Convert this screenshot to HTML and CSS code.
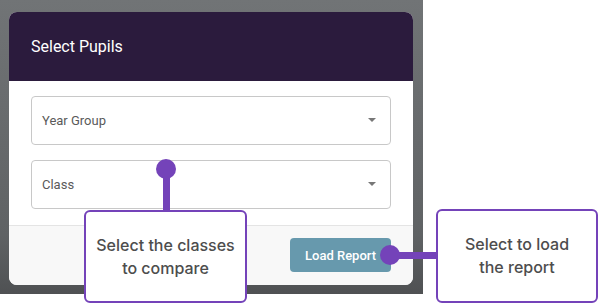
FILE: index.html
```html
<!DOCTYPE html>
<html lang="en">
<head>
  <meta charset="UTF-8" />
  <title>Select Pupils</title>
  <link rel="stylesheet" href="styles.css">
</head>
<body>
  <div class="backdrop">
    <div class="modal">
      <div class="modal-header">Select Pupils</div>
      <div class="modal-body">
        <div class="select-box">
          <span>Year Group</span>
          <span class="caret"></span>
        </div>
        <div class="select-box">
          <span>Class</span>
          <span class="caret"></span>
        </div>
      </div>
      <div class="modal-footer">
        <button class="load-btn">Load Report</button>
      </div>
    </div>
  </div>

  <!-- tutorial callouts -->
  <div class="pin pin-class">
    <span class="dot"></span>
    <span class="stem"></span>
  </div>
  <div class="callout callout-class">Select the classes<br>to compare</div>

  <div class="pin pin-load">
    <span class="dot"></span>
    <span class="arm"></span>
  </div>
  <div class="callout callout-load">Select to load<br>the report</div>
</body>
</html>
```

FILE: styles.css
```css
body {
  margin: 0;
  width: 601px;
  height: 306px;
  background-color: white;
  font-family: Roboto, "Liberation Sans", sans-serif;
  position: relative;
  overflow: hidden;
}
.backdrop {
  width: 423px;
  height: 294px;
  box-sizing: border-box;
  padding: 12px 10px 0 9px;
  background: linear-gradient(#717476, #5f6264 80%, #4f5153);
}
.modal {
  width: 404px;
  height: 273px;
  background-color: white;
  border-radius: 8px;
  overflow: hidden;
  display: flex;
  flex-direction: column;
}
.modal-header {
  height: 69px;
  background-color: #2b1b3d;
  color: white;
  font-size: 16px;
  padding-left: 22px;
  display: flex;
  align-items: center;
}
.modal-body {
  padding: 15px 22px 16px 22px;
  display: flex;
  flex-direction: column;
  gap: 15px;
}
.select-box {
  height: 49px;
  box-sizing: border-box;
  border: 1px solid #c8c8c8;
  border-radius: 4px;
  padding: 0 14px 1px 10px;
  display: flex;
  align-items: center;
  justify-content: space-between;
  font-size: 13px;
  color: #5a5a5a;
}
.caret {
  width: 0;
  height: 0;
  border-left: 4px solid transparent;
  border-right: 4px solid transparent;
  border-top: 4px solid #777;
}
.modal-footer {
  flex: 1;
  background-color: #f8f8f8;
  border-top: 1px solid #e4e4e4;
  display: flex;
  align-items: center;
  justify-content: flex-end;
  padding: 0 22px 1px 0;
}
.load-btn {
  width: 101px;
  height: 34px;
  background-color: #6799ad;
  color: white;
  border: none;
  border-radius: 4px;
  font-family: Roboto, "Liberation Sans", sans-serif;
  font-size: 13px;
  font-weight: 500;
}
.pin {
  position: absolute;
  display: flex;
  align-items: center;
}
.dot {
  width: 20px;
  height: 20px;
  border-radius: 50%;
  background-color: #7443b9;
  flex-shrink: 0;
}
.pin-class {
  left: 156px;
  top: 159px;
  flex-direction: column;
}
.stem {
  width: 7px;
  height: 33px;
  margin-top: -2px;
  background-color: #7443b9;
}
.pin-load {
  left: 380px;
  top: 245px;
}
.arm {
  width: 38px;
  height: 7px;
  margin-left: -2px;
  background-color: #7443b9;
}
.callout {
  position: absolute;
  box-sizing: border-box;
  border: 2px solid #7443b9;
  border-radius: 6px;
  background-color: white;
  display: flex;
  align-items: center;
  justify-content: center;
  text-align: center;
  font-family: Inter, "Liberation Sans", sans-serif;
  font-weight: 500;
  font-size: 16px;
  line-height: 23px;
  color: #4d4d4d;
}
.callout-class {
  left: 84px;
  top: 210px;
  width: 163px;
  height: 93px;
}
.callout-load {
  left: 436px;
  top: 209px;
  width: 162px;
  height: 94px;
}
```
